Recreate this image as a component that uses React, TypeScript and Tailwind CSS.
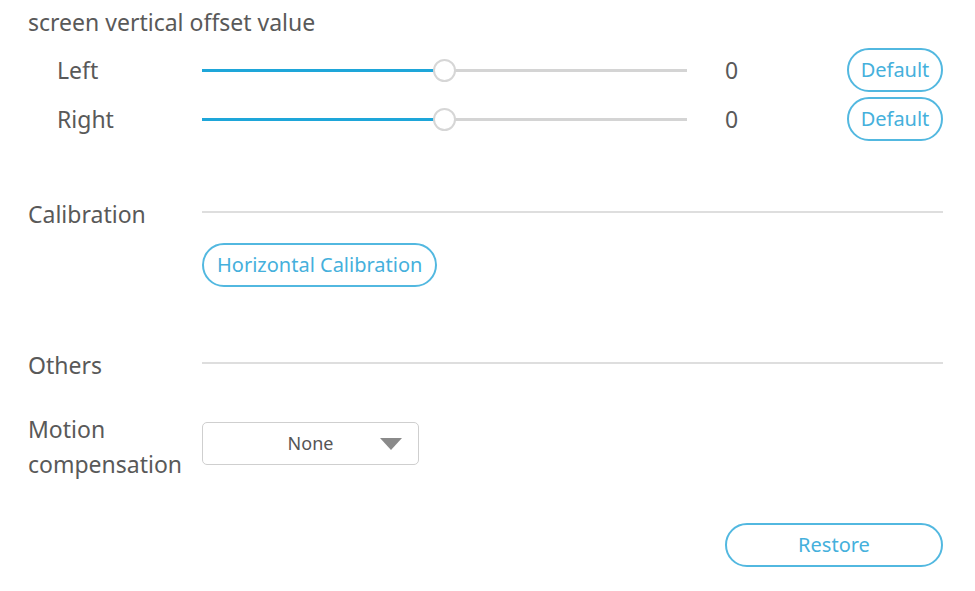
const font = { fontFamily: '"Noto Sans", "Open Sans", sans-serif' }

function SliderRow({ label, value }: { label: string; value: number }) {
  return (
    <div className="flex items-center h-[44px]">
      <div className="w-[174px] pl-[29px] text-[23px] text-[#595959]">{label}</div>
      <div className="relative w-[485px] h-[24px] flex items-center">
        <div className="w-full h-[3px] bg-[#d4d4d4]" />
        <div className="absolute left-0 w-[232px] h-[3px] bg-[#1ea6d9]" />
        <div className="absolute left-[231px] w-[23px] h-[23px] rounded-full bg-white border-2 border-[#d6d6d6]" />
      </div>
      <div className="w-[160px] pl-[38px] text-[23px] text-[#595959]">{value}</div>
      <button className="w-[96px] h-[44px] rounded-full border-2 border-[#52b8e0] text-[20px] text-[#45b0dc] flex items-center justify-center">
        Default
      </button>
    </div>
  )
}

function Section({ title }: { title: string }) {
  return (
    <div className="flex items-center h-[44px]">
      <div className="w-[174px] text-[23px] text-[#595959]">{title}</div>
      <div className="flex-1 h-[2px] bg-[#dedede] mb-[5px]" />
    </div>
  )
}

export default function App() {
  return (
    <div className="w-[975px] h-[591px] bg-white pl-[28px] pr-[32px]" style={font}>
      <div className="h-[44px] flex items-center text-[23px] text-[#595959]">screen vertical offset value</div>

      <div className="mt-[4px] flex flex-col gap-[5px]">
        <SliderRow label="Left" value={0} />
        <SliderRow label="Right" value={0} />
      </div>

      <div className="mt-[51px]">
        <Section title="Calibration" />
      </div>
      <div className="mt-[7px] pl-[174px]">
        <button className="h-[44px] px-[13px] rounded-full border-2 border-[#52b8e0] text-[20px] text-[#45b0dc] flex items-center">
          Horizontal Calibration
        </button>
      </div>

      <div className="mt-[56px]">
        <Section title="Others" />
      </div>

      <div className="mt-[25px] flex items-start">
        <div className="w-[174px] text-[23px] leading-[35px] text-[#595959]">
          Motion
          <br />
          compensation
        </div>
        <div className="mt-[10px] w-[217px] h-[43px] rounded-[5px] border border-[#cfcfcf] flex items-center">
          <span className="flex-1 text-center pl-[38px] text-[18px] text-[#555]">None</span>
          <svg width="22" height="12" viewBox="0 0 22 12" className="mr-[16px]">
            <path d="M0 0 L22 0 L11 12 Z" fill="#8a8a8a" />
          </svg>
        </div>
      </div>

      <div className="mt-[41px] flex justify-end">
        <button className="w-[218px] h-[44px] rounded-full border-2 border-[#52b8e0] text-[20px] text-[#45b0dc] flex items-center justify-center">
          Restore
        </button>
      </div>
    </div>
  )
}
